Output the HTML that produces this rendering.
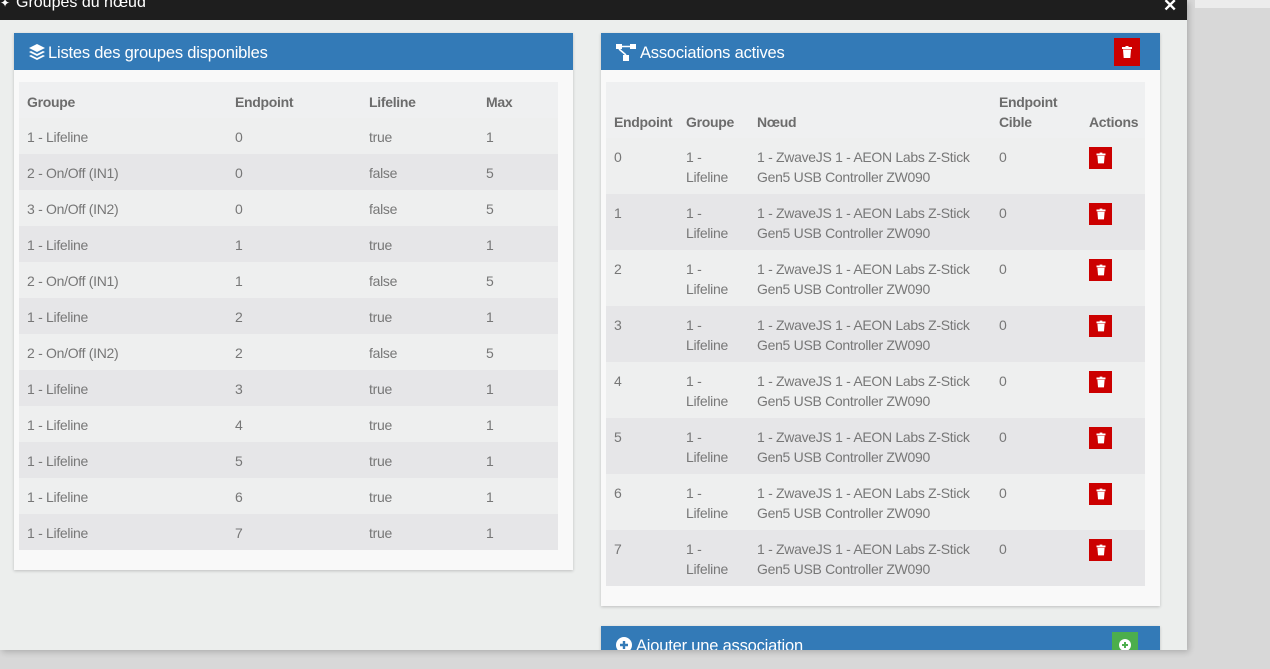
<!DOCTYPE html>
<html><head><meta charset="utf-8"><style>
*{margin:0;padding:0;box-sizing:border-box}
body{width:1270px;height:669px;background:#d8d8d8;font-family:"Liberation Sans",sans-serif;position:relative;overflow:hidden;color:#666}
.modal{position:absolute;left:0;top:0;width:1187px;height:650px;background:#eceeed;overflow:hidden;box-shadow:2px 2px 6px rgba(0,0,0,.2)}
.top{position:absolute;left:0;top:0;width:1187px;height:20px;background:#1e1e1e;color:#fff;font-size:16px}
.top .t{position:absolute;left:16px;top:-6px}
.top .x{position:absolute;left:1163px;top:-4px;font-size:17px;font-weight:bold}
.panel{position:absolute;background:#f9f9f9;box-shadow:0 1px 3px rgba(0,0,0,.2)}
.ph{height:37px;background:#337ab7;color:#fff;font-size:16.5px;line-height:40px;padding-left:34px;position:relative;letter-spacing:-0.2px}
table{position:absolute;border-collapse:collapse;font-size:14px;letter-spacing:-0.3px}
th{text-align:left;font-weight:bold;color:#6c6c6c;background:#eff0f1;padding-left:8px;vertical-align:bottom;padding-bottom:8px}
td{padding-left:8px;color:#777;padding-top:2px}
tr.o td{background:#eeefef}
tr.e td{background:#e6e6e8}
.btn{display:inline-block;width:23px;height:22px;background:#c00;position:relative}
.trash{position:absolute;left:50%;top:50%;transform:translate(-50%,-50%)}
</style></head><body>
<div style="position:absolute;left:1195px;top:0;width:75px;height:8px;background:#ececec"></div>
<div class="modal">
<div class="top"><span style="position:absolute;left:0;top:-4px;font-size:12px">✦</span><span class="t">Groupes du nœud</span><span class="x">✕</span></div>

<div class="panel" style="left:14px;top:33px;width:559px;height:537px">
<div class="ph"><svg style="position:absolute;left:15px;top:11px" width="16" height="16" viewBox="0 0 16 16"><path d="M8 0L16 4 8 8 0 4Z" fill="#fff"/><path d="M2 7L8 10 14 7 16 8 8 12 0 8Z" fill="#fff"/><path d="M2 11L8 14 14 11 16 12 8 16 0 12Z" fill="#fff"/></svg>Listes des groupes disponibles</div>
<table style="left:5px;top:49px;width:539px">
<tr style="height:36px"><th style="width:208px">Groupe</th><th style="width:134px">Endpoint</th><th style="width:117px">Lifeline</th><th>Max</th></tr>
<tr class="o" style="height:36px"><td>1 - Lifeline</td><td>0</td><td>true</td><td>1</td></tr>
<tr class="e" style="height:36px"><td>2 - On/Off (IN1)</td><td>0</td><td>false</td><td>5</td></tr>
<tr class="o" style="height:36px"><td>3 - On/Off (IN2)</td><td>0</td><td>false</td><td>5</td></tr>
<tr class="e" style="height:36px"><td>1 - Lifeline</td><td>1</td><td>true</td><td>1</td></tr>
<tr class="o" style="height:36px"><td>2 - On/Off (IN1)</td><td>1</td><td>false</td><td>5</td></tr>
<tr class="e" style="height:36px"><td>1 - Lifeline</td><td>2</td><td>true</td><td>1</td></tr>
<tr class="o" style="height:36px"><td>2 - On/Off (IN2)</td><td>2</td><td>false</td><td>5</td></tr>
<tr class="e" style="height:36px"><td>1 - Lifeline</td><td>3</td><td>true</td><td>1</td></tr>
<tr class="o" style="height:36px"><td>1 - Lifeline</td><td>4</td><td>true</td><td>1</td></tr>
<tr class="e" style="height:36px"><td>1 - Lifeline</td><td>5</td><td>true</td><td>1</td></tr>
<tr class="o" style="height:36px"><td>1 - Lifeline</td><td>6</td><td>true</td><td>1</td></tr>
<tr class="e" style="height:36px"><td>1 - Lifeline</td><td>7</td><td>true</td><td>1</td></tr>
</table>
</div>

<div class="panel" style="left:601px;top:33px;width:559px;height:573px">
<div class="ph" style="padding-left:39px"><svg style="position:absolute;left:15px;top:11px" width="20" height="17" viewBox="0 0 20 17"><rect x="0" y="0" width="6" height="5" fill="#fff"/><rect x="14" y="0" width="6" height="5" fill="#fff"/><rect x="7" y="11" width="6" height="6" fill="#fff"/><path d="M6 2.5H14M3 5L10 11" stroke="#fff" stroke-width="1.6"/></svg>Associations actives
<span class="btn" style="position:absolute;left:513px;top:5px;width:26px;height:28px"><svg class="trash" width="10" height="12" viewBox="0 0 10 12"><rect x="0" y="1" width="10" height="2" fill="#fff"/><rect x="3.5" y="0" width="3" height="1.5" fill="#fff"/><path d="M1 3.5H9L8.3 12H1.7Z" fill="#fff"/></svg></span></div>
<table style="left:5px;top:49px;width:539px;line-height:20px">
<tr style="height:56px"><th style="width:72px;padding-bottom:6px">Endpoint</th><th style="width:71px;padding-bottom:6px">Groupe</th><th style="width:242px;padding-bottom:6px">Nœud</th><th style="width:90px;padding-bottom:6px">Endpoint<br>Cible</th><th style="padding-bottom:6px">Actions</th></tr>
<tbody id="rb"></tbody>
</table>
</div>

<div class="panel" style="left:601px;top:626px;width:559px;height:60px">
<div class="ph" style="padding-left:35px;line-height:40px"><svg style="position:absolute;left:15px;top:11px" width="16" height="16" viewBox="0 0 16 16"><circle cx="8" cy="8" r="8" fill="#fff"/><path d="M8 4V12M4 8H12" stroke="#337ab7" stroke-width="2.4"/></svg>Ajouter une association
<span style="position:absolute;left:511px;top:6px;width:26px;height:26px;background:#4cae4c"><svg class="trash" width="12" height="12" viewBox="0 0 16 16"><circle cx="8" cy="8" r="8" fill="#fff"/><path d="M8 4V12M4 8H12" stroke="#4cae4c" stroke-width="2.6"/></svg></span></div>
</div>
</div>
<script>
var h='';for(var i=0;i<8;i++){h+='<tr class="'+(i%2?'e':'o')+'" style="height:56px"><td style="vertical-align:top;padding-top:9px">'+i+'</td><td style="vertical-align:top;padding-top:9px">1 -<br>Lifeline</td><td style="vertical-align:top;padding-top:9px">1 - ZwaveJS 1 - AEON Labs Z-Stick<br>Gen5 USB Controller ZW090</td><td style="vertical-align:top;padding-top:9px">0</td><td style="vertical-align:top;padding-top:9px"><span class="btn"><svg class="trash" width="9" height="11" viewBox="0 0 10 12"><rect x="0" y="1" width="10" height="2" fill="#fff"/><rect x="3.5" y="0" width="3" height="1.5" fill="#fff"/><path d="M1 3.5H9L8.3 12H1.7Z" fill="#fff"/></svg></span></td></tr>';}
document.getElementById('rb').innerHTML=h;
</script>
</body></html>
